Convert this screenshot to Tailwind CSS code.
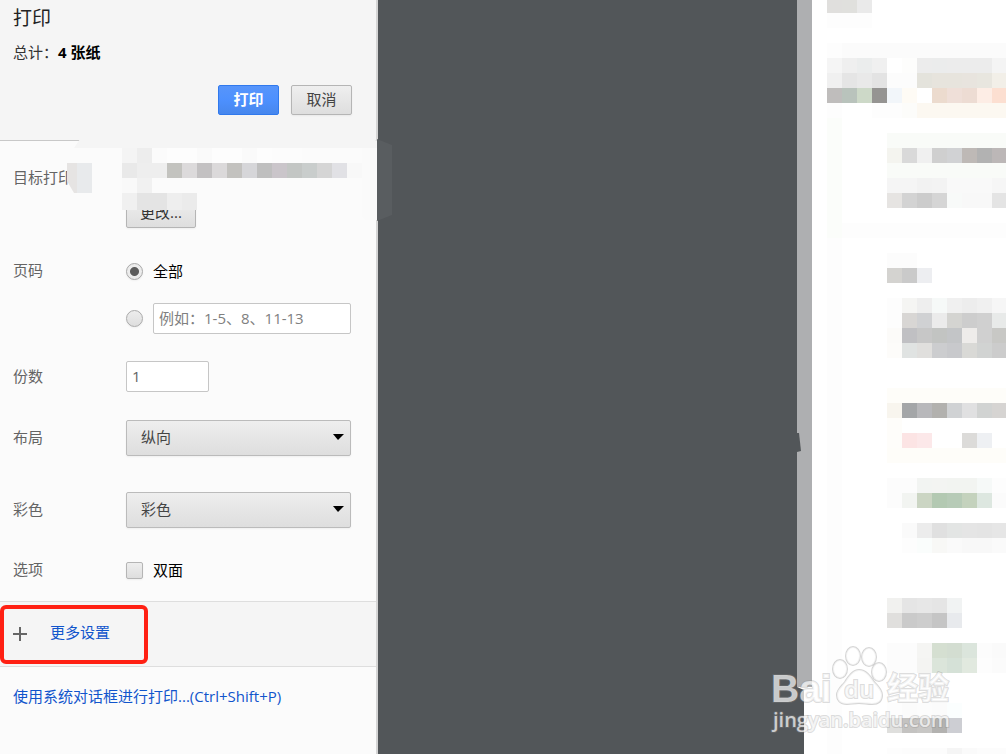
<!DOCTYPE html>
<html lang="zh-CN" class="h-full">
<head>
    <meta charset="utf-8" />
    <meta content="width=device-width, initial-scale=1.0" name="viewport" />
    <title>打印</title>
    <script src="https://cdn.jsdelivr.net/npm/@tailwindcss/browser@4"></script>
</head>
<body class="min-h-full flex bg-[#525659] overflow-hidden font-['Open_Sans','Noto_Sans_CJK_SC',sans-serif] text-[15px] leading-5 text-[#646464]">
    <!-- Print settings -->
    <aside class="relative z-10 w-[378px] shrink-0 min-h-screen bg-[#fbfbfb] border-r-2 border-[#d4d4d4]">
        <header class="bg-[#f5f5f5] border-b border-[#c8c8c8] pl-[13px] pr-6 pt-1 pb-[25px]">
            <h1 class="text-[19px] leading-7 text-[#222]">打印</h1>
            <p class="mt-[10px] text-[#333]">总计：<b class="text-black">4 张纸</b></p>
            <div class="mt-[23px] flex justify-end gap-3">
                <button class="w-[61px] h-[30px] pb-[2px] rounded-xs border border-[#3079ed] bg-linear-to-b from-[#5795fb] via-[#4d90fe] to-[#4787ed] text-white font-bold">打印</button>
                <button class="w-[61px] h-[30px] pb-[2px] rounded-xs border border-[#b5b5b5] bg-linear-to-b from-[#efefef] to-[#dedede] text-[#444] shadow-xs">取消</button>
            </div>
        </header>

        <form>
            <div class="flex pl-[13px] pr-[25px] pt-[26px]">
                <span class="w-[113px] shrink-0">目标打印机</span>
                <button type="button" class="mt-[31px] w-[70px] h-[30px] pb-[2px] rounded-xs border border-[#b5b5b5] bg-linear-to-b from-[#efefef] to-[#dedede] text-[#333] shadow-xs">更改...</button>
            </div>

            <fieldset class="flex min-w-0 pl-[13px] pr-[25px] pt-8">
                <legend class="contents"><span class="w-[113px] shrink-0">页码</span></legend>
                <div class="flex-1 min-w-0">
                    <label class="flex items-center gap-[10px] pt-px text-black">
                        <input type="radio" name="pages" checked class="appearance-none size-[17px] rounded-full border border-[#aaa] bg-[#e8e8e8] checked:bg-[radial-gradient(circle,#5c5c5c_0_4px,#ececec_5px)] shadow-xs">全部
                    </label>
                    <div class="mt-[22px] flex items-center gap-[10px]">
                        <input type="radio" name="pages" aria-label="自定义页码" class="appearance-none size-[17px] shrink-0 rounded-full border border-[#aaa] bg-linear-to-b from-[#ededed] to-[#dedede] shadow-xs">
                        <input type="text" aria-label="页码范围" placeholder="例如：1-5、8、11-13" class="w-full min-w-0 flex-1 h-[31px] rounded-xs border border-[#c6c6c6] bg-white px-[5px] pb-[2px] placeholder:text-[#808080]">
                    </div>
                </div>
            </fieldset>

            <div class="flex items-center pl-[13px] pr-[25px] pt-[27px]">
                <label for="copies" class="w-[113px] shrink-0 pb-[2px]">份数</label>
                <input id="copies" type="text" value="1" class="w-[83px] h-[31px] rounded-xs border border-[#c6c6c6] bg-white px-[5px] pb-[2px]">
            </div>

            <div class="flex items-center pl-[13px] pr-[25px] pt-7">
                <label for="layout" class="w-[113px] shrink-0 pb-[2px]">布局</label>
                <div class="relative flex-1">
                    <select id="layout" class="appearance-none block w-full h-9 rounded-xs border border-[#bbb] bg-linear-to-b from-[#eeeeee] to-[#dedede] pl-[14px] pb-[2px] text-[#444] shadow-xs">
                        <option>纵向</option>
                        <option>横向</option>
                    </select>
                    <svg class="absolute right-[7px] top-[14px] pointer-events-none" width="12" height="7"><path d="M1 0h11L6 6z" fill="#000"/></svg>
                </div>
            </div>

            <div class="flex items-center pl-[13px] pr-[25px] pt-9">
                <label for="color" class="w-[113px] shrink-0 pb-[2px]">彩色</label>
                <div class="relative flex-1">
                    <select id="color" class="appearance-none block w-full h-9 rounded-xs border border-[#bbb] bg-linear-to-b from-[#eeeeee] to-[#dedede] pl-[14px] pb-[2px] text-[#444] shadow-xs">
                        <option>彩色</option>
                        <option>黑白</option>
                    </select>
                    <svg class="absolute right-[7px] top-[14px] pointer-events-none" width="12" height="7"><path d="M1 0h11L6 6z" fill="#000"/></svg>
                </div>
            </div>

            <div class="flex pl-[13px] pr-[25px] pt-[31px] pb-[21px]">
                <span class="w-[113px] shrink-0">选项</span>
                <label class="flex items-center gap-[10px] pt-px text-black">
                    <input type="checkbox" class="appearance-none size-[17px] rounded-xs border border-[#b5b5b5] bg-linear-to-b from-[#eeeeee] to-[#dedede] shadow-xs">双面
                </label>
            </div>
        </form>

        <div class="relative border-y border-[#dedede] bg-[#f5f5f5] h-[66px] pl-[13px] flex items-center">
            <a href="#" class="flex items-center gap-[22px] text-[#15c]">
                <svg width="15" height="15"><path d="M7 0v14M0 7h14" stroke="#666" stroke-width="2"/></svg>
                <span class="pb-1">更多设置</span>
            </a>
            <span class="absolute left-0 top-[3px] w-[148px] h-[59px] rounded-md border-4 border-[#ff2013]"></span>
        </div>
        <p class="pl-[13px] pt-[19px]"><a href="#" class="text-[#15c]">使用系统对话框进行打印...(Ctrl+Shift+P)</a></p>

        <!-- Mosaic over the printer name -->
        <svg id="printerMosaic" class="absolute left-0 top-[130px] pointer-events-none" width="392" height="100">
            <path d="M74 18L84 3H362L377 11V18z" fill="#f5f5f5"/>
            <path d="M377 9L392 15V85L377 91z" fill="#595d60"/>
            <path d="M362 18H377V90H366L362 86z" fill="#fafafa"/>
            <path d="M67 33h10v30h-3l-7-12z" fill="#e6e4e3"/>
            <path d="M77 33h15v30H77z" fill="#e8eaec"/>
        </svg>
    </aside>

    <!-- Page preview -->
    <main class="relative flex-1 flex justify-end overflow-hidden">
        <div class="w-[15px] bg-[#aeafb1]"></div>
        <div class="w-[194px] bg-white">
            <svg id="pageMosaic" class="block" width="194" height="754"></svg>
        </div>
        <svg class="absolute right-0 top-0 pointer-events-none" width="246" height="754">
            <path d="M37 433h2l2 18-4 1z" fill="#525659"/>
            <path d="M37 687h15v67H37z" fill="#fff"/>
            <path d="M37 687l7 3v64h-7z" fill="#525659"/>
            <g fill="#fff" fill-opacity=".7" stroke="#888" stroke-opacity=".35" stroke-width="2" paint-order="stroke">
                <ellipse cx="80" cy="669" rx="7" ry="9"/>
                <ellipse cx="93" cy="656" rx="7" ry="9"/>
                <ellipse cx="109" cy="657" rx="7" ry="9"/>
                <ellipse cx="119" cy="672" rx="7" ry="9"/>
                <path d="M99 670c7 0 11 6 15 12c5 5 8 9 8 13c0 6-4 9-10 9c-5 0-8-1-13-1s-8 1-12 1c-7 0-10-4-10-9c0-5 4-8 8-13c4-6 8-12 14-12z"/>
            </g>
            <g fill="#fff" fill-opacity=".7" stroke="#888" stroke-opacity=".3" stroke-width="2" paint-order="stroke">
                <text x="11" y="702" font-family="Liberation Sans" font-weight="bold" font-size="39">Bai</text>
                <text x="84" y="698" font-family="Open Sans" font-weight="600" font-size="24">du</text>
                <text x="127" y="699" font-family="Noto Sans CJK SC" font-weight="bold" font-size="31">经验</text>
                <text x="13" y="727" font-family="Open Sans" font-weight="600" font-size="20">jingyan.baidu.com</text>
            </g>
        </svg>
    </main>

    <script>
        // [x, y, cell colours...], cells are 15px squares, '' leaves a cell empty
        const pageCells = [
            [15, -2, '#e0dfdd', '#e0e0dd', '#eaeaea'],
            [15, 13, '#fdfdfd', '#fdfdfd', '#fdfdfd'],
            [15, 43, '#fdfdfd', '#fbfbfb', '#fbfbfb', '#fbfbfb', '#fbfbfb', '#fbfbfb', '#fbfbfb', '#fbfbfb', '#fbfbfb', '#fbfbfb', '#fbfbfb', '#fbfbfb'],
            [15, 58, '#f5f5f5', '#efefef', '#ebeded', '#f0f0f0', '', '#fdfdfc', '#ececec', '#ebecec', '#ececec', '#ececec', '#ececec', '#f4f4f4'],
            [15, 73, '#f0f0f0', '#e5e5e5', '#e9e9e9', '#e3e3e3', '#fcfcfc', '#fcfcfc', '#e4e3dc', '#e7e4dd', '#e7e4dd', '#e8e4de', '#e8e6df', '#f2efe8'],
            [15, 88, '#bfbdbc', '#b9c3bc', '#cdd9c8', '#959492', '#f2f6fa', '#fefbf5', '#ffffff', '#ecdbce', '#efdfd8', '#eddcd3', '#fdede5', '#fcdfd1'],
            [15, 103, '#fdfdfd', '', '', '#fdfdfd', '#fdfdfd', '#fcfcfa', '#fcf8f1', '#fcf8f1', '#fcf8f1', '#fcf8f1', '#fcf8f1', '#fcf8f1'],
            [75, 133, '#f9fbf8', '#f9fbf8', '#f9fbf8', '#f9fbf8', '#f9fbf8', '#f9fbf8', '#f9fbf8', '#f9fbf8'],
            [75, 148, '#f4f4ef', '#d9d9d9', '#f0f0f0', '#cfcfcf', '#d1d2d4', '#beb9b6', '#b2b2b2', '#bcb7b7'],
            [75, 163, '#f9fbf8', '#f9fbf8', '#f9fbf8', '#f9fbf8', '#f9fbf8', '#f9fbf8', '#f9fbf8', '#f9fbf8'],
            [75, 178, '#f5f5f5', '#f5f5f5', '#f2f2f2', '#f3f3f3', '#f9f9f9', '#f9f9f9', '#f9f9f9', '#f6f6f6'],
            [75, 193, '#e6e4e2', '#d3d3d3', '#cccccc', '#d5d5d5', '#f8faf9', '#f8f8f8', '#f8f8f8', '#e4e4e4'],
            [30, 223, '#fdfdfd', '#fdfdfd', '#fdfdfd', '#fdfdfd', '#fdfdfd', '#fdfdfd', '#fdfdfd', '#fdfdfd', '#fdfdfd', '#fdfdfd', '#fdfdfd'],
            [75, 253, '#fcfcfc', '#fcfcfc'],
            [75, 268, '#d4d3d0', '#cacaca', '#edeef1'],
            [75, 298, '#fdfdfd', '#f5f5f3', '#eeeeee', '#f6f9f8', '#f0f0f0', '#ededed', '#f0f0f0', '#f6f6f6'],
            [75, 313, '#fdfdfd', '#d8d6d4', '#d0d1d3', '#ebebeb', '#d4d4d1', '#cdcdcd', '#d0d0d0', '#e8eae9'],
            [75, 328, '#fcfbf9', '#c0c0c3', '#c7c7c7', '#c2c4c2', '#c3c5c7', '#eeecea', '#d0d0d0', '#c8c8c5'],
            [75, 343, '#fdfcfa', '#e0e3e2', '#e0dfdd', '#cccdcf', '#c8c9cc', '#d9d9d6', '#d1d3d2', '#cccccc'],
            [75, 388, '#fefdf9', '#fefdf9', '#fefdf9', '#fefdf9', '#fefdf9', '#fefdf9', '#fefdf9', '#fefdf9'],
            [75, 403, '#f8f5ee', '#a4a6a8', '#b8b8bb', '#b2b1ae', '#d0d2d4', '#e0e0e1', '#d1d3d2', '#d6d4d2'],
            [75, 418, '#fefdfa'],
            [75, 433, '#fefdfa', '#fce4e4', '#fce8e9', '', '', '#dcdbd9', '#eef0f3'],
            [75, 448, '#fefdf9', '#fefdf9', '#fefdf9', '#fefdf9', '#fefdf9', '#fefdf9', '#fefdf9', '#fefdf9'],
            [75, 478, '#fcfcfc', '#fcfcfc', '#f2f4f2', '#f3f4f2', '#f2f4f1', '#f2f4f1', '#f6f9f8', '#fdfdfd'],
            [75, 493, '#fcfcfc', '#f2f4f1', '#cbd5c3', '#b3c9b2', '#b7cbb7', '#c4d2bd', '#dde7e0', '#fbfbfb'],
            [90, 523, '#fafafa', '#ececec', '#e0e0e0', '#e3e5e4', '#e5e5e5', '#e4e4e4', '#e6e6e6'],
            [90, 538, '#fdfdfd', '#fafdfc', '#f8f8f6', '#fafafa', '#f8f8f8', '#f8f8f8', '#fafafa'],
            [75, 598, '#f1f1ef', '#e5e5e5', '#e7e7e7', '#e5e5e5', '#f1f3f3'],
            [75, 613, '#e0dfdd', '#cacaca', '#cdcdcd', '#c5c5c5', '#e8eaed'],
            [75, 643, '#fcfcfc', '#fcfcfc', '#f5f5f3', '#d5dfd1', '#d3ddd1', '#dbe5dc', '#fcfcfc', '#fafafa'],
            [75, 658, '#fcfcfc', '#fcfcfc', '#f4f4f2', '#dbe5da', '#d5e1d7', '#e1e9df', '#fdfdfd', '#fbfbfb'],
            [75, 703, '#fdfdfd', '#fbfbfb', '#fcfcfc', '#fbfbfb', '#fbfefe'],
            [75, 718, '#dfdfdd', '#c4c3c1', '#c8c7c5', '#b3b2b0', '#cdced3'],
            [75, 748, '#fdfdfd', '#fcfcfc', '#fcfcfc', '#fcfcfc', '#f5f5f5', '#fafafa', '#fcfcfc', '#fcfcfc'],
        ];
        // faint left margin of the page
        for (let y = 118; y < 754; y += 15) {
            pageCells.push([15, y, y < 238 ? '#fbfdfa' : '#fdfdfd']);
        }

        const printerCells = [
            [122, 18, '#f4f4f4', '#ededed', '#fbfbfb', '#fdfdfd', '#fdfdfd', '#fafafa', '#fdfdfd', '#fdfdfd', '#fafafa', '#fdfdfd', '#fcfcfc', '#fcfcfc'],
            [122, 33, '#e9e9e9', '#eeeeee', '#eeeeee', '#c3c3bf', '#dcdadb', '#c3c1c2', '#dbd9da', '#c3c2bf', '#d6d6d9', '#bfbfbf', '#cac5ca', '#c3c6c4', '#c9cdcc', '#d5d5d5', '#e1e1e5', '#f8f8f8'],
            [122, 48, '#f9f9f9', '#f1f1f1', '#fbfbfb'],
            [122, 63, '#f0f0f0', '#e4e4e4', '#e4e4e4', '#eeeeee', '#ebebeb'],
            [122, 65, '#f0f0f0', '#e4e4e4', '#e4e4e4', '#eeeeee', '#ebebeb'],
        ];

        function drawCells(svg, rows) {
            rows.forEach(([x, y, ...colors]) => {
                colors.forEach((color, i) => {
                    if (!color) return;
                    const cell = document.createElementNS('http://www.w3.org/2000/svg', 'rect');
                    cell.setAttribute('x', x + i * 15);
                    cell.setAttribute('y', y);
                    cell.setAttribute('width', 15);
                    cell.setAttribute('height', 15);
                    cell.setAttribute('fill', color);
                    svg.appendChild(cell);
                });
            });
        }

        drawCells(document.getElementById('pageMosaic'), pageCells);
        drawCells(document.getElementById('printerMosaic'), printerCells);
    </script>
</body>
</html>
